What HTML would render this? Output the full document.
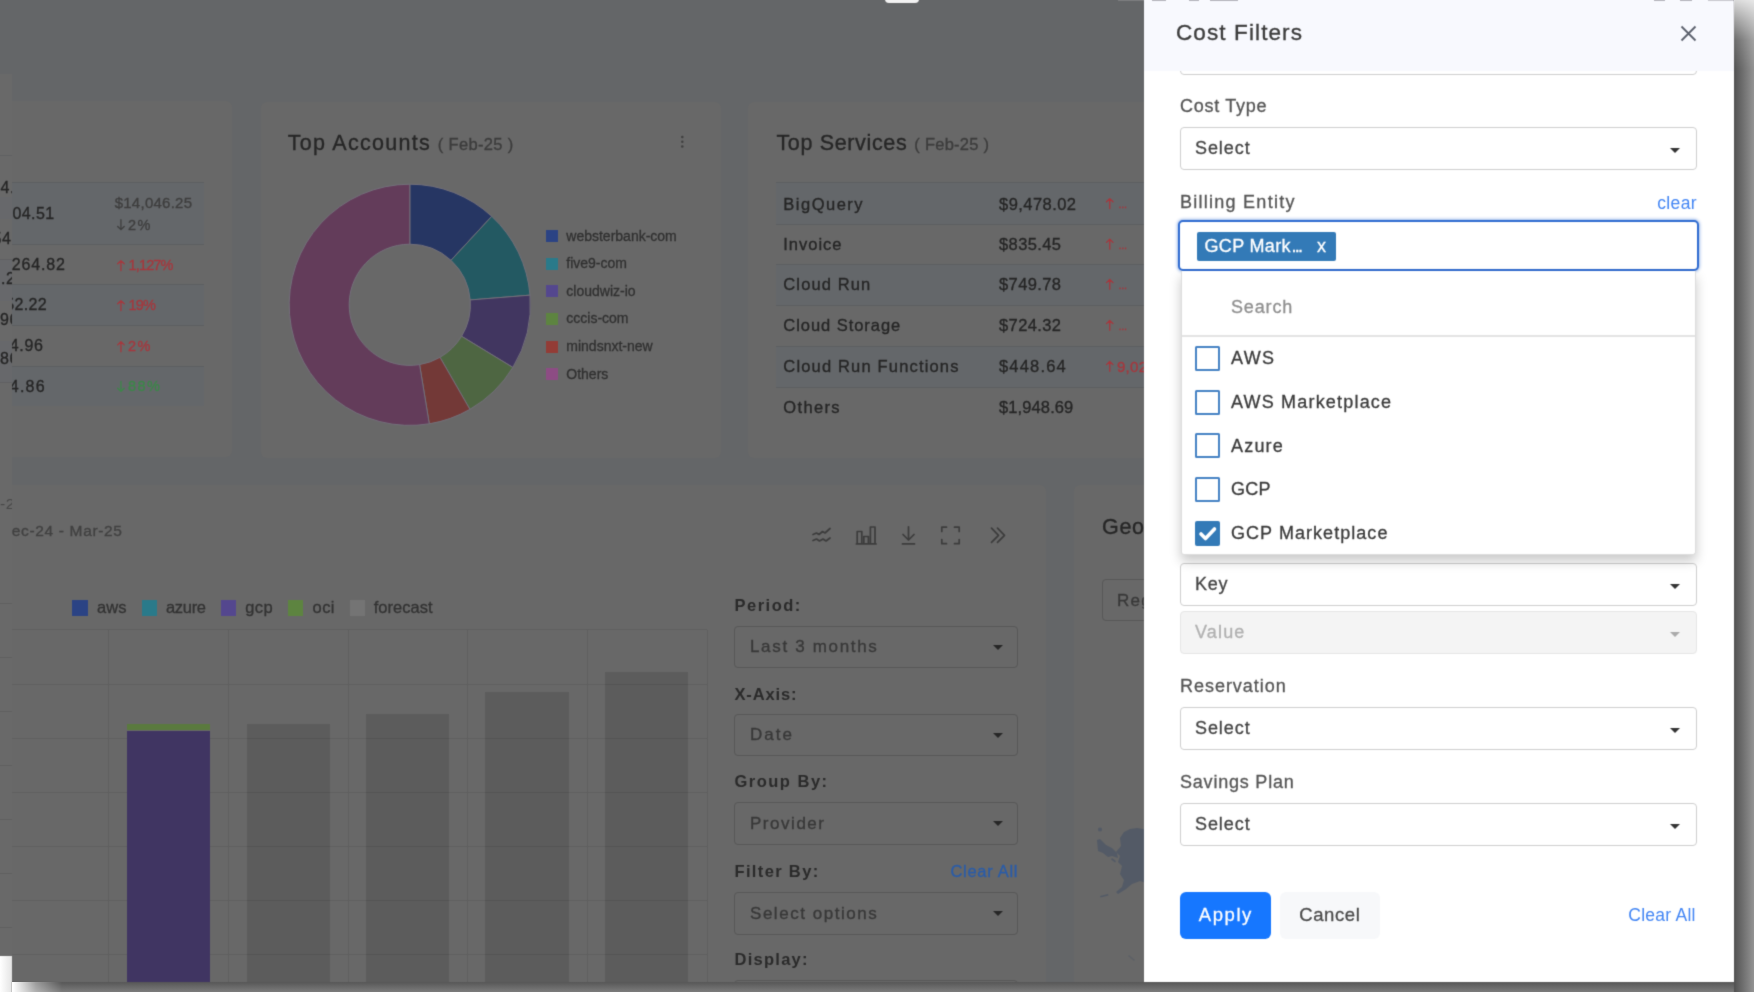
<!DOCTYPE html>
<html><head><meta charset="utf-8">
<style>
*{box-sizing:border-box;margin:0;padding:0}
html,body{width:1754px;height:992px;overflow:hidden;background:#fff;font-family:"Liberation Sans",sans-serif;}
.abs{position:absolute}
.t{position:absolute;white-space:nowrap;line-height:1;color:#333}
#shadow{position:absolute;left:14px;top:4px;width:1718px;height:974px;box-shadow:0 6px 14px 4px rgba(0,0,0,.75);}
#screen{position:absolute;left:-6px;top:-6px;width:1740px;height:988px;overflow:hidden;background:#646668;clip-path:polygon(0 0,1740px 0,1740px 988px,18px 988px,18px 962px,0 962px);}
#all{position:absolute;left:0;top:0;width:1754px;height:992px;filter:url(#soft)}
#dim{position:absolute;left:0;top:0;width:1734px;height:982px;background:rgba(0,0,0,.6)}
.card{position:absolute;background:#fff;border-radius:6px}
.sel{position:absolute;border:1px solid #cfcfcf;border-radius:4px;background:#fff}
.caret{position:absolute;width:0;height:0;border-left:5px solid transparent;border-right:5px solid transparent;border-top:5px solid #333}
</style></head><body>
<svg width="0" height="0" style="position:absolute"><defs><filter id="soft" x="0" y="0" width="100%" height="100%" color-interpolation-filters="sRGB"><feConvolveMatrix order="3" kernelMatrix="0.02 0.1 0.02 0.1 0.52 0.1 0.02 0.1 0.02" divisor="1" edgeMode="duplicate" preserveAlpha="true"/></filter></defs></svg>
<div id="all">
<div class="abs" style="left:1734px;top:-6px;width:26px;height:1004px;background:linear-gradient(to right,#4e4e4e 0,#585858 2px,#939393 20px,#a6a6a6 26px);-webkit-mask-image:linear-gradient(to bottom,rgba(0,0,0,.2) 0,rgba(0,0,0,.22) 6px,rgba(0,0,0,.55) 26px,rgba(0,0,0,.85) 46px,#000 76px);mask-image:linear-gradient(to bottom,rgba(0,0,0,.2) 0,rgba(0,0,0,.22) 6px,rgba(0,0,0,.55) 26px,rgba(0,0,0,.85) 46px,#000 76px)"></div>
<div class="abs" style="left:-6px;top:982px;width:1740px;height:16px;background:linear-gradient(to bottom,#555 0,#5e5e5e 2px,#7c7c7c 10px,#8c8c8c 16px);-webkit-mask-image:linear-gradient(to right,transparent 19px,rgba(0,0,0,.6) 42px,#000 68px);mask-image:linear-gradient(to right,transparent 19px,rgba(0,0,0,.6) 42px,#000 68px)"></div>
<div class="abs" style="left:-6px;top:956px;width:18px;height:42px;background:linear-gradient(to right,#fff 0,#fff 6px,#e4e4e4 18px)"></div>
<div id="screen"><div class="abs" style="left:6px;top:6px;width:0;height:0">
<div class="card" style="left:-20px;top:101px;width:252px;height:356px;background:#686868"></div>
<div class="abs" style="left:12px;top:182.6px;width:191.6px;height:61.70000000000002px;background:#64676a;"></div>
<div class="abs" style="left:12px;top:182.1px;width:191.6px;height:1px;background:#5c5e61;"></div>
<div class="abs" style="left:12px;top:244.3px;width:191.6px;height:40.39999999999998px;background:#686868;"></div>
<div class="abs" style="left:12px;top:243.8px;width:191.6px;height:1px;background:#5c5e61;"></div>
<div class="abs" style="left:12px;top:284.7px;width:191.6px;height:41.0px;background:#64676a;"></div>
<div class="abs" style="left:12px;top:284.2px;width:191.6px;height:1px;background:#5c5e61;"></div>
<div class="abs" style="left:12px;top:325.7px;width:191.6px;height:40.900000000000034px;background:#686868;"></div>
<div class="abs" style="left:12px;top:325.2px;width:191.6px;height:1px;background:#5c5e61;"></div>
<div class="abs" style="left:12px;top:366.6px;width:191.6px;height:39.799999999999955px;background:#64676a;"></div>
<div class="abs" style="left:12px;top:366.1px;width:191.6px;height:1px;background:#5c5e61;"></div>
<div class="t" style="left:3.2px;top:205.6px;font-size:16px;color:#252525;letter-spacing:0.41px;font-weight:normal;-webkit-text-stroke:0.33px #252525;">204.51</div>
<div class="t" style="left:11.8px;top:257.3px;font-size:16px;color:#252525;letter-spacing:0.85px;font-weight:normal;-webkit-text-stroke:0.33px #252525;">264.82</div>
<div class="t" style="left:5.2px;top:297.3px;font-size:16px;color:#252525;letter-spacing:0.34px;font-weight:normal;-webkit-text-stroke:0.33px #252525;">52.22</div>
<div class="t" style="left:9.8px;top:338.4px;font-size:16px;color:#252525;letter-spacing:0.62px;font-weight:normal;-webkit-text-stroke:0.33px #252525;">4.96</div>
<div class="t" style="left:9.8px;top:378.7px;font-size:16px;color:#252525;letter-spacing:1.22px;font-weight:normal;-webkit-text-stroke:0.33px #252525;">4.86</div>
<div class="t" style="left:114.7px;top:194.8px;font-size:15px;color:#3e3e3e;letter-spacing:0.25px;font-weight:normal;-webkit-text-stroke:0.33px #3e3e3e;">$14,046.25</div>
<svg class="abs" style="left:0;top:0" width="1734" height="982"><path d="M120.95,219.75 L120.95,229.65 M117.70,226.50 L120.95,229.65 L124.20,226.50" stroke="#3e3e3e" stroke-width="1.3" fill="none" stroke-linecap="round" stroke-linejoin="round"/></svg>
<div class="t" style="left:128px;top:217.8px;font-size:14.5px;color:#3e3e3e;letter-spacing:1.55px;font-weight:normal;-webkit-text-stroke:0.33px #3e3e3e;">2%</div>
<svg class="abs" style="left:0;top:0" width="1734" height="982"><path d="M120.95,270.55 L120.95,260.65 M117.70,263.80 L120.95,260.65 L124.20,263.80" stroke="#a6373d" stroke-width="1.3" fill="none" stroke-linecap="round" stroke-linejoin="round"/></svg>
<div class="t" style="left:128.5px;top:258.1px;font-size:14.5px;color:#a6373d;letter-spacing:-0.84px;font-weight:normal;-webkit-text-stroke:0.33px #a6373d;">1,127%</div>
<svg class="abs" style="left:0;top:0" width="1734" height="982"><path d="M120.95,310.55 L120.95,300.65 M117.70,303.80 L120.95,300.65 L124.20,303.80" stroke="#a6373d" stroke-width="1.3" fill="none" stroke-linecap="round" stroke-linejoin="round"/></svg>
<div class="t" style="left:128.5px;top:298.1px;font-size:14.5px;color:#a6373d;letter-spacing:-0.76px;font-weight:normal;-webkit-text-stroke:0.33px #a6373d;">19%</div>
<svg class="abs" style="left:0;top:0" width="1734" height="982"><path d="M120.95,351.65 L120.95,341.75 M117.70,344.90 L120.95,341.75 L124.20,344.90" stroke="#a6373d" stroke-width="1.3" fill="none" stroke-linecap="round" stroke-linejoin="round"/></svg>
<div class="t" style="left:128px;top:339.1px;font-size:14.5px;color:#a6373d;letter-spacing:1.55px;font-weight:normal;-webkit-text-stroke:0.33px #a6373d;">2%</div>
<svg class="abs" style="left:0;top:0" width="1734" height="982"><path d="M120.95,381.45 L120.95,391.35 M117.70,388.20 L120.95,391.35 L124.20,388.20" stroke="#3c8749" stroke-width="1.3" fill="none" stroke-linecap="round" stroke-linejoin="round"/></svg>
<div class="t" style="left:128px;top:379.4px;font-size:14.5px;color:#3c8749;letter-spacing:1.49px;font-weight:normal;-webkit-text-stroke:0.33px #3c8749;">88%</div>
<div class="card" style="left:260.5px;top:101.5px;width:460px;height:356px;background:#686868"></div>
<div class="t" style="left:287.8px;top:132.8px;font-size:21.5px;color:#262626;letter-spacing:1.28px;font-weight:normal;-webkit-text-stroke:0.35px #262626;">Top Accounts</div>
<div class="t" style="left:437.8px;top:135.8px;font-size:16.5px;color:#3c3c3c;letter-spacing:0.34px;font-weight:normal;-webkit-text-stroke:0.33px #3c3c3c;">( Feb-25 )</div>
<svg class="abs" style="left:680px;top:134px" width="5" height="16" viewBox="0 0 5 16"><circle cx="2.3" cy="3" r="1.25" fill="#3f3f3f"/><circle cx="2.3" cy="7.7" r="1.25" fill="#3f3f3f"/><circle cx="2.3" cy="12.5" r="1.25" fill="#3f3f3f"/></svg>
<svg class="abs" style="left:0;top:0" width="1734" height="982">
<path d="M409.80,184.20 A120.6,120.6 0 0 1 491.74,216.31 L450.97,260.34 A60.6,60.6 0 0 0 409.80,244.20 Z" fill="#263663" stroke="#73707a" stroke-width="1"/>
<path d="M491.74,216.31 A120.6,120.6 0 0 1 530.01,295.13 L470.20,299.94 A60.6,60.6 0 0 0 450.97,260.34 Z" fill="#235962" stroke="#73707a" stroke-width="1"/>
<path d="M530.01,295.13 A120.6,120.6 0 0 1 512.85,367.45 L461.58,336.28 A60.6,60.6 0 0 0 470.20,299.94 Z" fill="#413660" stroke="#73707a" stroke-width="1"/>
<path d="M512.85,367.45 A120.6,120.6 0 0 1 469.92,409.35 L440.01,357.33 A60.6,60.6 0 0 0 461.58,336.28 Z" fill="#4e6642" stroke="#73707a" stroke-width="1"/>
<path d="M469.92,409.35 A120.6,120.6 0 0 1 429.29,423.81 L419.59,364.60 A60.6,60.6 0 0 0 440.01,357.33 Z" fill="#733937" stroke="#73707a" stroke-width="1"/>
<path d="M429.29,423.81 A120.6,120.6 0 1 1 409.80,184.20 L409.80,244.20 A60.6,60.6 0 1 0 419.59,364.60 Z" fill="#633c5a" stroke="#73707a" stroke-width="1"/>
</svg>
<div class="abs" style="left:545.8px;top:230.0px;width:12.5px;height:12.2px;background:#2b4384;"></div>
<div class="t" style="left:566.3px;top:228.5px;font-size:14px;color:#303030;letter-spacing:0.00px;font-weight:normal;-webkit-text-stroke:0.3px #303030;">websterbank-com</div>
<div class="abs" style="left:545.8px;top:257.6px;width:12.5px;height:12.2px;background:#2a7a8a;"></div>
<div class="t" style="left:566.3px;top:256.1px;font-size:14px;color:#303030;letter-spacing:0.00px;font-weight:normal;-webkit-text-stroke:0.3px #303030;">five9-com</div>
<div class="abs" style="left:545.8px;top:285.3px;width:12.5px;height:12.2px;background:#54478e;"></div>
<div class="t" style="left:566.3px;top:283.8px;font-size:14px;color:#303030;letter-spacing:0.00px;font-weight:normal;-webkit-text-stroke:0.3px #303030;">cloudwiz-io</div>
<div class="abs" style="left:545.8px;top:312.9px;width:12.5px;height:12.2px;background:#5d8440;"></div>
<div class="t" style="left:566.3px;top:311.4px;font-size:14px;color:#303030;letter-spacing:0.00px;font-weight:normal;-webkit-text-stroke:0.3px #303030;">cccis-com</div>
<div class="abs" style="left:545.8px;top:340.6px;width:12.5px;height:12.2px;background:#933c36;"></div>
<div class="t" style="left:566.3px;top:339.1px;font-size:14px;color:#303030;letter-spacing:0.00px;font-weight:normal;-webkit-text-stroke:0.3px #303030;">mindsnxt-new</div>
<div class="abs" style="left:545.8px;top:368.2px;width:12.5px;height:12.2px;background:#8d4c84;"></div>
<div class="t" style="left:566.3px;top:366.8px;font-size:14px;color:#303030;letter-spacing:0.00px;font-weight:normal;-webkit-text-stroke:0.3px #303030;">Others</div>
<div class="card" style="left:747.7px;top:101.5px;width:461px;height:356px;background:#686868"></div>
<div class="t" style="left:776.4px;top:132.8px;font-size:21.5px;color:#262626;letter-spacing:0.66px;font-weight:normal;-webkit-text-stroke:0.35px #262626;">Top Services</div>
<div class="t" style="left:914.3px;top:135.8px;font-size:16.5px;color:#3c3c3c;letter-spacing:0.25px;font-weight:normal;-webkit-text-stroke:0.33px #3c3c3c;">( Feb-25 )</div>
<div class="abs" style="left:775.6px;top:182px;width:400px;height:42px;background:#64676a;"></div>
<div class="abs" style="left:775.6px;top:181.5px;width:400px;height:1px;background:#5c5e61;"></div>
<div class="t" style="left:783.3px;top:195.6px;font-size:16.5px;color:#252525;letter-spacing:1.50px;font-weight:normal;-webkit-text-stroke:0.33px #252525;">BigQuery</div>
<div class="t" style="left:999px;top:195.6px;font-size:16.5px;color:#252525;letter-spacing:0.45px;font-weight:normal;-webkit-text-stroke:0.33px #252525;">$9,478.02</div>
<svg class="abs" style="left:0;top:0" width="1734" height="982"><path d="M1109.75,208.55 L1109.75,198.65 M1106.50,201.80 L1109.75,198.65 L1113.00,201.80" stroke="#a6373d" stroke-width="1.3" fill="none" stroke-linecap="round" stroke-linejoin="round"/></svg>
<div class="t" style="left:1118.5px;top:199.3px;font-size:11px;color:#a6373d;letter-spacing:-0.33px;font-weight:normal;-webkit-text-stroke:0.3px #a6373d;">...</div>
<div class="abs" style="left:775.6px;top:224px;width:400px;height:40.69999999999999px;background:#686868;"></div>
<div class="abs" style="left:775.6px;top:223.5px;width:400px;height:1px;background:#5c5e61;"></div>
<div class="t" style="left:783.3px;top:236.2px;font-size:16.5px;color:#252525;letter-spacing:0.99px;font-weight:normal;-webkit-text-stroke:0.33px #252525;">Invoice</div>
<div class="t" style="left:999px;top:236.2px;font-size:16.5px;color:#252525;letter-spacing:0.39px;font-weight:normal;-webkit-text-stroke:0.33px #252525;">$835.45</div>
<svg class="abs" style="left:0;top:0" width="1734" height="982"><path d="M1109.75,249.15 L1109.75,239.25 M1106.50,242.40 L1109.75,239.25 L1113.00,242.40" stroke="#a6373d" stroke-width="1.3" fill="none" stroke-linecap="round" stroke-linejoin="round"/></svg>
<div class="t" style="left:1118.5px;top:239.9px;font-size:11px;color:#a6373d;letter-spacing:-0.33px;font-weight:normal;-webkit-text-stroke:0.3px #a6373d;">...</div>
<div class="abs" style="left:775.6px;top:264.7px;width:400px;height:41.0px;background:#64676a;"></div>
<div class="abs" style="left:775.6px;top:264.2px;width:400px;height:1px;background:#5c5e61;"></div>
<div class="t" style="left:783.3px;top:276.4px;font-size:16.5px;color:#252525;letter-spacing:1.13px;font-weight:normal;-webkit-text-stroke:0.33px #252525;">Cloud Run</div>
<div class="t" style="left:999px;top:276.4px;font-size:16.5px;color:#252525;letter-spacing:0.39px;font-weight:normal;-webkit-text-stroke:0.33px #252525;">$749.78</div>
<svg class="abs" style="left:0;top:0" width="1734" height="982"><path d="M1109.75,289.35 L1109.75,279.45 M1106.50,282.60 L1109.75,279.45 L1113.00,282.60" stroke="#a6373d" stroke-width="1.3" fill="none" stroke-linecap="round" stroke-linejoin="round"/></svg>
<div class="t" style="left:1118.5px;top:280.1px;font-size:11px;color:#a6373d;letter-spacing:-0.33px;font-weight:normal;-webkit-text-stroke:0.3px #a6373d;">...</div>
<div class="abs" style="left:775.6px;top:305.7px;width:400px;height:40.60000000000002px;background:#686868;"></div>
<div class="abs" style="left:775.6px;top:305.2px;width:400px;height:1px;background:#5c5e61;"></div>
<div class="t" style="left:783.3px;top:317.4px;font-size:16.5px;color:#252525;letter-spacing:0.95px;font-weight:normal;-webkit-text-stroke:0.33px #252525;">Cloud Storage</div>
<div class="t" style="left:999px;top:317.4px;font-size:16.5px;color:#252525;letter-spacing:0.39px;font-weight:normal;-webkit-text-stroke:0.33px #252525;">$724.32</div>
<svg class="abs" style="left:0;top:0" width="1734" height="982"><path d="M1109.75,330.35 L1109.75,320.45 M1106.50,323.60 L1109.75,320.45 L1113.00,323.60" stroke="#a6373d" stroke-width="1.3" fill="none" stroke-linecap="round" stroke-linejoin="round"/></svg>
<div class="t" style="left:1118.5px;top:321.1px;font-size:11px;color:#a6373d;letter-spacing:-0.33px;font-weight:normal;-webkit-text-stroke:0.3px #a6373d;">...</div>
<div class="abs" style="left:775.6px;top:346.3px;width:400px;height:40.69999999999999px;background:#64676a;"></div>
<div class="abs" style="left:775.6px;top:345.8px;width:400px;height:1px;background:#5c5e61;"></div>
<div class="t" style="left:783.3px;top:358.4px;font-size:16.5px;color:#252525;letter-spacing:1.17px;font-weight:normal;-webkit-text-stroke:0.33px #252525;">Cloud Run Functions</div>
<div class="t" style="left:999px;top:358.4px;font-size:16.5px;color:#252525;letter-spacing:1.18px;font-weight:normal;-webkit-text-stroke:0.33px #252525;">$448.64</div>
<svg class="abs" style="left:0;top:0" width="1734" height="982"><path d="M1109.75,371.35 L1109.75,361.45 M1106.50,364.60 L1109.75,361.45 L1113.00,364.60" stroke="#a6373d" stroke-width="1.3" fill="none" stroke-linecap="round" stroke-linejoin="round"/></svg>
<div class="t" style="left:1117px;top:359.1px;font-size:15px;color:#a6373d;letter-spacing:0.27px;font-weight:normal;-webkit-text-stroke:0.33px #a6373d;">9,02</div>
<div class="abs" style="left:775.6px;top:387px;width:400px;height:41px;background:#686868;"></div>
<div class="abs" style="left:775.6px;top:386.5px;width:400px;height:1px;background:#5c5e61;"></div>
<div class="t" style="left:783.3px;top:398.6px;font-size:16.5px;color:#252525;letter-spacing:1.36px;font-weight:normal;-webkit-text-stroke:0.33px #252525;">Others</div>
<div class="t" style="left:999px;top:398.6px;font-size:16.5px;color:#252525;letter-spacing:0.11px;font-weight:normal;-webkit-text-stroke:0.33px #252525;">$1,948.69</div>
<div class="card" style="left:-20px;top:484.7px;width:1065.8px;height:520px;background:#686868"></div>
<div class="card" style="left:1073.7px;top:484.7px;width:700px;height:520px;background:#686868"></div>
<div class="t" style="left:0px;top:523.0px;font-size:15.5px;color:#414141;letter-spacing:0.65px;font-weight:normal;-webkit-text-stroke:0.33px #414141;">Dec-24 - Mar-25</div>
<div class="abs" style="left:72.4px;top:600.4px;width:15.4px;height:15.3px;background:#2b4384;"></div>
<div class="t" style="left:97px;top:599.4px;font-size:16.5px;color:#323232;letter-spacing:0.13px;font-weight:normal;-webkit-text-stroke:0.3px #323232;">aws</div>
<div class="abs" style="left:141.6px;top:600.4px;width:15.4px;height:15.3px;background:#2a7a8a;"></div>
<div class="t" style="left:166px;top:599.4px;font-size:16.5px;color:#323232;letter-spacing:-0.32px;font-weight:normal;-webkit-text-stroke:0.3px #323232;">azure</div>
<div class="abs" style="left:220.8px;top:600.4px;width:15.4px;height:15.3px;background:#54478e;"></div>
<div class="t" style="left:245.2px;top:599.4px;font-size:16.5px;color:#323232;letter-spacing:0.45px;font-weight:normal;-webkit-text-stroke:0.3px #323232;">gcp</div>
<div class="abs" style="left:288px;top:600.4px;width:15.4px;height:15.3px;background:#5d8440;"></div>
<div class="t" style="left:312.6px;top:599.4px;font-size:16.5px;color:#323232;letter-spacing:0.36px;font-weight:normal;-webkit-text-stroke:0.3px #323232;">oci</div>
<div class="abs" style="left:349.6px;top:600.4px;width:15.4px;height:15.3px;background:#747474;"></div>
<div class="t" style="left:373.7px;top:599.4px;font-size:16.5px;color:#323232;letter-spacing:0.04px;font-weight:normal;-webkit-text-stroke:0.3px #323232;">forecast</div>
<div class="abs" style="left:12px;top:629.3px;width:695px;height:1px;background:#5f5f5f;"></div>
<div class="abs" style="left:12px;top:684.0px;width:695px;height:1px;background:#5f5f5f;"></div>
<div class="abs" style="left:12px;top:737.8px;width:695px;height:1px;background:#5f5f5f;"></div>
<div class="abs" style="left:12px;top:791.5px;width:695px;height:1px;background:#5f5f5f;"></div>
<div class="abs" style="left:12px;top:845.5px;width:695px;height:1px;background:#5f5f5f;"></div>
<div class="abs" style="left:12px;top:899.8px;width:695px;height:1px;background:#5f5f5f;"></div>
<div class="abs" style="left:12px;top:953.5px;width:695px;height:1px;background:#5f5f5f;"></div>
<div class="abs" style="left:107.7px;top:629.8px;width:1px;height:360px;background:#5f5f5f;"></div>
<div class="abs" style="left:227.8px;top:629.8px;width:1px;height:360px;background:#5f5f5f;"></div>
<div class="abs" style="left:347.5px;top:629.8px;width:1px;height:360px;background:#5f5f5f;"></div>
<div class="abs" style="left:466.5px;top:629.8px;width:1px;height:360px;background:#5f5f5f;"></div>
<div class="abs" style="left:586.5px;top:629.8px;width:1px;height:360px;background:#5f5f5f;"></div>
<div class="abs" style="left:706.5px;top:629.8px;width:1px;height:360px;background:#5f5f5f;"></div>
<div class="abs" style="left:246.8px;top:724px;width:82.89999999999998px;height:400px;background:rgba(0,0,0,.115);"></div>
<div class="abs" style="left:366.2px;top:714.3px;width:82.80000000000001px;height:400px;background:rgba(0,0,0,.115);"></div>
<div class="abs" style="left:485.4px;top:691.6px;width:83.39999999999998px;height:400px;background:rgba(0,0,0,.115);"></div>
<div class="abs" style="left:605.2px;top:671.6px;width:83.09999999999991px;height:400px;background:rgba(0,0,0,.115);"></div>
<div class="abs" style="left:126.7px;top:724px;width:83.3px;height:6px;background:#5a7a3e;"></div>
<div class="abs" style="left:126.7px;top:731.2px;width:83.3px;height:400px;background:#403562;"></div>
<div class="t" style="left:734.5px;top:596.8px;font-size:16.5px;color:#2a2a2a;letter-spacing:1.49px;font-weight:bold;">Period:</div>
<div class="t" style="left:734.5px;top:685.5px;font-size:16.5px;color:#2a2a2a;letter-spacing:0.86px;font-weight:bold;">X-Axis:</div>
<div class="t" style="left:734.5px;top:773.4px;font-size:16.5px;color:#2a2a2a;letter-spacing:1.49px;font-weight:bold;">Group By:</div>
<div class="t" style="left:734.5px;top:863.4px;font-size:16.5px;color:#2a2a2a;letter-spacing:1.35px;font-weight:bold;">Filter By:</div>
<div class="t" style="left:734.5px;top:951.2px;font-size:16.5px;color:#2a2a2a;letter-spacing:1.26px;font-weight:bold;">Display:</div>
<div class="sel" style="left:734px;top:625.8px;width:284px;height:42.5px;border-color:#575757;background:#686868"></div>
<div class="t" style="left:750px;top:638.3px;font-size:17px;color:#383838;letter-spacing:1.67px;font-weight:normal;-webkit-text-stroke:0.33px #383838;">Last 3 months</div>
<div class="caret" style="left:992.8px;top:645.0999999999999px;border-left-width:5.2px;border-right-width:5.2px;border-top-width:5.5px;border-top-color:#262626"></div>
<div class="sel" style="left:734px;top:713.7px;width:284px;height:42.5px;border-color:#575757;background:#686868"></div>
<div class="t" style="left:750px;top:726.2px;font-size:17px;color:#383838;letter-spacing:2.03px;font-weight:normal;-webkit-text-stroke:0.33px #383838;">Date</div>
<div class="caret" style="left:992.8px;top:733.0px;border-left-width:5.2px;border-right-width:5.2px;border-top-width:5.5px;border-top-color:#262626"></div>
<div class="sel" style="left:734px;top:802px;width:284px;height:42.5px;border-color:#575757;background:#686868"></div>
<div class="t" style="left:750px;top:814.5px;font-size:17px;color:#383838;letter-spacing:1.53px;font-weight:normal;-webkit-text-stroke:0.33px #383838;">Provider</div>
<div class="caret" style="left:992.8px;top:821.3px;border-left-width:5.2px;border-right-width:5.2px;border-top-width:5.5px;border-top-color:#262626"></div>
<div class="sel" style="left:734px;top:892px;width:284px;height:42.5px;border-color:#575757;background:#686868"></div>
<div class="t" style="left:750px;top:904.5px;font-size:17px;color:#383838;letter-spacing:1.54px;font-weight:normal;-webkit-text-stroke:0.33px #383838;">Select options</div>
<div class="caret" style="left:992.8px;top:911.3px;border-left-width:5.2px;border-right-width:5.2px;border-top-width:5.5px;border-top-color:#262626"></div>
<div class="sel" style="left:734px;top:979.5px;width:284px;height:42px;border-color:#575757;background:#686868"></div>
<div class="t" style="left:950.5px;top:863.4px;font-size:16.5px;color:#2a5ca8;letter-spacing:0.69px;font-weight:normal;-webkit-text-stroke:0.33px #2a5ca8;">Clear All</div>
<div class="t" style="left:1102px;top:517.2px;font-size:21.5px;color:#262626;letter-spacing:0.68px;font-weight:normal;-webkit-text-stroke:0.35px #262626;">Geo</div>
<div class="sel" style="left:1102px;top:579px;width:200px;height:42px;border-color:#575757;background:#686868"></div>
<div class="t" style="left:1117px;top:591.5px;font-size:17px;color:#383838;letter-spacing:1.23px;font-weight:normal;-webkit-text-stroke:0.33px #383838;">Region</div>
<svg class="abs" style="left:0;top:0" width="1734" height="982" fill="none" stroke="#3c3c3c" stroke-width="1.7" stroke-linecap="round" stroke-linejoin="round">
<path d="M813,534.5 l3.5,-1.5 l2.5,1.5 l3.5,-3 l2.5,1.5 l5,-4.5"/>
<path d="M813,540.5 l3.5,-1.5 l3,2 l3.5,-2 l3,2 l4,-3"/>
<path d="M857.2,543.8 V531.5 h4.6 V543.8 M863.8,543.8 V536.5 h4.6 V543.8 M870.4,543.8 V527 h4.6 V543.8 M856.4,543.9 H876" />
<path d="M908.5,526.8 V540 M903,534.5 L908.5,540 L914,534.5 M902.5,543.9 H914.5"/>
<path d="M941.8,531.5 V527.2 H946.5 M954.5,527.2 H959.2 V531.5 M959.2,539.5 V543.7 H954.5 M946.5,543.7 H941.8 V539.5"/>
<path d="M991.5,528.2 L998.5,535.3 L991.5,542.4 M997.5,528.2 L1004.5,535.3 L997.5,542.4"/>
</svg>
<svg class="abs" style="left:0;top:0" width="1734" height="982" fill="#535a66">
<path d="M1120,838 L1124,832 L1130,829 L1137,828 L1143,829 L1150,830 L1150,884 L1140,881 L1132,884 L1126,889 L1118,894 L1116,892 L1122,887 L1124,880 L1120,874 L1122,866 L1118,862 L1120,856 L1116,852 L1121,846 Z"/>
<path d="M1097,840 L1100,839 L1106,845 L1112,848 L1117,853 L1118,858 L1112,856 L1108,857 L1103,853 L1098,851 Z"/>
<circle cx="1100" cy="829.5" r="2"/>
<path d="M1112,858 l4,3 l-1,1.5 l-4,-3 Z"/>
<path d="M1100,896 l8,-2 l.5,1.5 l-8,2 Z"/>
<path d="M1129,955 l6,5 l-1,1 l-6,-5 Z" fill="#5d6066"/>
</svg>
<div class="abs" style="left:-5px;top:74px;width:17px;height:883px;background:#696969;"></div>
<div class="abs" style="left:-5px;top:155.0px;width:17px;height:1px;background:#5f6062;"></div>
<div class="abs" style="left:-5px;top:218.0px;width:17px;height:1px;background:#5f6062;"></div>
<div class="abs" style="left:-5px;top:259.1px;width:17px;height:1px;background:#5f6062;"></div>
<div class="abs" style="left:-5px;top:300.2px;width:17px;height:1px;background:#5f6062;"></div>
<div class="abs" style="left:-5px;top:340.5px;width:17px;height:1px;background:#5f6062;"></div>
<div class="abs" style="left:-5px;top:381.5px;width:17px;height:1px;background:#5f6062;"></div>
<div class="abs" style="left:-5px;top:197px;width:17px;height:21.5px;background:#67686b;"></div>
<div class="abs" style="left:-5px;top:259.6px;width:17px;height:41px;background:#67686b;"></div>
<div class="abs" style="left:-5px;top:341px;width:17px;height:41px;background:#67686b;"></div>
<div class="abs" style="left:-5px;top:150px;width:17px;height:300px;overflow:hidden">
<div class="t" style="left:5.5px;top:30.3px;font-size:16px;color:#252525;letter-spacing:0.60px;font-weight:normal;-webkit-text-stroke:0.33px #252525;">4.</div>
<div class="t" style="left:-2.5px;top:80.7px;font-size:16px;color:#252525;letter-spacing:0.60px;font-weight:normal;-webkit-text-stroke:0.33px #252525;">54</div>
<div class="t" style="left:6px;top:120.5px;font-size:16px;color:#252525;letter-spacing:0.60px;font-weight:normal;-webkit-text-stroke:0.33px #252525;">.2</div>
<div class="t" style="left:5px;top:162.0px;font-size:16px;color:#252525;letter-spacing:0.60px;font-weight:normal;-webkit-text-stroke:0.33px #252525;">96</div>
<div class="t" style="left:5px;top:201.0px;font-size:16px;color:#252525;letter-spacing:0.60px;font-weight:normal;-webkit-text-stroke:0.33px #252525;">86</div>
</div>
<div class="abs" style="left:-5px;top:603.1px;width:17px;height:1px;background:#5f5f5f;"></div>
<div class="abs" style="left:-5px;top:657.0px;width:17px;height:1px;background:#5f5f5f;"></div>
<div class="abs" style="left:-5px;top:711.0px;width:17px;height:1px;background:#5f5f5f;"></div>
<div class="abs" style="left:-5px;top:765.0px;width:17px;height:1px;background:#5f5f5f;"></div>
<div class="abs" style="left:-5px;top:819.0px;width:17px;height:1px;background:#5f5f5f;"></div>
<div class="abs" style="left:-5px;top:873.0px;width:17px;height:1px;background:#5f5f5f;"></div>
<div class="abs" style="left:-5px;top:927.0px;width:17px;height:1px;background:#5f5f5f;"></div>
<div class="abs" style="left:-5px;top:490px;width:17px;height:30px;overflow:hidden">
<div class="t" style="left:5px;top:6.2px;font-size:15.5px;color:#474747;letter-spacing:0.50px;font-weight:normal;">-2</div>
</div>
<div class="abs" style="left:885px;top:-8px;width:34px;height:10.5px;background:#f2f2f2;border-radius:4px"></div>
<div class="abs" style="left:1118px;top:-2px;width:26px;height:3px;background:#7c7d7f;"></div>
</div></div>
<div id="panel" class="abs" style="left:1144px;top:-6px;width:590px;height:988px;background:#fff;overflow:hidden"><div class="abs" style="left:0;top:6px;width:0;height:0">
<div class="sel" style="left:36px;top:31.5px;width:517px;height:43px"></div>
<div class="abs" style="left:0;top:-6px;width:590px;height:76.5px;background:#f8f9fe"></div>
<div class="abs" style="left:8px;top:-2px;width:14px;height:2.8px;background:#b4b4bc"></div>
<div class="abs" style="left:45px;top:-2px;width:10px;height:2.8px;background:#b4b4bc"></div>
<div class="abs" style="left:66px;top:-2px;width:28px;height:2.8px;background:#b4b4bc"></div>
<div class="abs" style="left:510px;top:-2px;width:11px;height:2.8px;background:#b4b4bc"></div>
<div class="abs" style="left:536px;top:-2px;width:12px;height:2.8px;background:#b4b4bc"></div>
<div class="abs" style="left:564px;top:-2px;width:26px;height:2.8px;background:#c9c9cf"></div>
<div class="t" style="left:32px;top:21.8px;font-size:22.5px;color:#3c3c3c;letter-spacing:1.11px;font-weight:normal;-webkit-text-stroke:0.35px #3c3c3c;">Cost Filters</div>
<svg class="abs" style="left:536px;top:25px" width="17" height="17" viewBox="0 0 17 17"><path d="M1.5 1.5 L15.5 15.5 M15.5 1.5 L1.5 15.5" stroke="#5a5f6b" stroke-width="1.8" fill="none"/></svg>
<div class="t" style="left:36px;top:97.0px;font-size:18px;color:#555;letter-spacing:0.72px;font-weight:normal;-webkit-text-stroke:0.3px #555;">Cost Type</div>
<div class="sel" style="left:36px;top:126.8px;width:517px;height:43.5px;background:#fff;border-color:#cfcfcf"></div>
<div class="t" style="left:51px;top:139.0px;font-size:18px;color:#444;letter-spacing:0.92px;font-weight:normal;-webkit-text-stroke:0.3px #444;">Select</div>
<div class="caret" style="left:525.5px;top:147.85000000000002px;border-top-color:#333;border-top-width:5.5px;border-left-width:5.2px;border-right-width:5.2px"></div>
<div class="t" style="left:36px;top:193.0px;font-size:18px;color:#555;letter-spacing:1.26px;font-weight:normal;-webkit-text-stroke:0.3px #555;">Billing Entity</div>
<div class="t" style="left:513.3px;top:195.4px;font-size:17.5px;color:#4285f4;letter-spacing:0.32px;font-weight:normal;">clear</div>
<div class="sel" style="left:36px;top:563px;width:517px;height:43.3px;background:#fff;border-color:#cfcfcf"></div>
<div class="t" style="left:51px;top:575.0px;font-size:18px;color:#444;letter-spacing:0.74px;font-weight:normal;-webkit-text-stroke:0.3px #444;">Key</div>
<div class="caret" style="left:525.5px;top:583.9499999999999px;border-top-color:#333;border-top-width:5.5px;border-left-width:5.2px;border-right-width:5.2px"></div>
<div class="sel" style="left:36px;top:611.2px;width:517px;height:43.3px;background:#f4f4f4;border-color:#e6e6e6"></div>
<div class="t" style="left:51px;top:623.2px;font-size:18px;color:#b0b0b0;letter-spacing:1.15px;font-weight:normal;-webkit-text-stroke:0.3px #b0b0b0;">Value</div>
<div class="caret" style="left:525.5px;top:632.15px;border-top-color:#aaa;border-top-width:5.5px;border-left-width:5.2px;border-right-width:5.2px"></div>
<div class="abs" style="left:34px;top:220px;width:521px;height:51px;border:2.5px solid #2f6bd0;border-radius:5px;background:#fff;box-shadow:0 0 3px 1px rgba(47,107,208,.45)"></div>
<div class="abs" style="left:52.5px;top:232px;width:139px;height:29px;background:#337ab7;border-radius:2px"></div>
<div class="t" style="left:60.5px;top:237.3px;font-size:18px;color:#fff;letter-spacing:0.33px;font-weight:normal;-webkit-text-stroke:0.3px #fff;">GCP Mark</div>
<div class="t" style="left:147.5999999999999px;top:237.3px;font-size:18px;color:#fff;letter-spacing:-1.80px;font-weight:normal;-webkit-text-stroke:0.3px #fff;">...</div>
<div class="t" style="left:173px;top:237.3px;font-size:18px;color:#fff;letter-spacing:0.00px;font-weight:normal;-webkit-text-stroke:0.3px #fff;">x</div>
<div class="abs" style="left:37px;top:271px;width:515px;height:284px;background:#fff;border:1px solid #ddd;border-top:none;box-shadow:0 6px 12px rgba(0,0,0,.22);border-radius:0 0 3px 3px"></div>
<div class="t" style="left:87px;top:298.0px;font-size:18px;color:#8f8f8f;letter-spacing:0.86px;font-weight:normal;-webkit-text-stroke:0.3px #8f8f8f;">Search</div>
<div class="abs" style="left:38px;top:334.5px;width:513px;height:2px;background:#e3e3e3"></div>
<div class="abs" style="left:51px;top:345.9px;width:25px;height:25px;border:2.8px solid #4682c4;border-radius:1.5px;background:#fff"></div>
<div class="t" style="left:87px;top:349.4px;font-size:18px;color:#3a3a3a;letter-spacing:1.33px;font-weight:normal;-webkit-text-stroke:0.3px #3a3a3a;">AWS</div>
<div class="abs" style="left:51px;top:389.5px;width:25px;height:25px;border:2.8px solid #4682c4;border-radius:1.5px;background:#fff"></div>
<div class="t" style="left:87px;top:393.0px;font-size:18px;color:#3a3a3a;letter-spacing:1.19px;font-weight:normal;-webkit-text-stroke:0.3px #3a3a3a;">AWS Marketplace</div>
<div class="abs" style="left:51px;top:433.2px;width:25px;height:25px;border:2.8px solid #4682c4;border-radius:1.5px;background:#fff"></div>
<div class="t" style="left:87px;top:436.7px;font-size:18px;color:#3a3a3a;letter-spacing:1.20px;font-weight:normal;-webkit-text-stroke:0.3px #3a3a3a;">Azure</div>
<div class="abs" style="left:51px;top:476.8px;width:25px;height:25px;border:2.8px solid #4682c4;border-radius:1.5px;background:#fff"></div>
<div class="t" style="left:87px;top:480.3px;font-size:18px;color:#3a3a3a;letter-spacing:0.30px;font-weight:normal;-webkit-text-stroke:0.3px #3a3a3a;">GCP</div>
<div class="abs" style="left:51px;top:520.5px;width:25px;height:25px;background:#337ab7;border-radius:2px"></div>
<svg class="abs" style="left:51px;top:520.5px" width="25" height="25" viewBox="0 0 25 25"><path d="M6 13 L10.5 17.5 L19.5 8" stroke="#fff" stroke-width="3.6" fill="none" stroke-linecap="round" stroke-linejoin="round"/></svg>
<div class="t" style="left:87px;top:524.0px;font-size:18px;color:#3a3a3a;letter-spacing:1.05px;font-weight:normal;-webkit-text-stroke:0.3px #3a3a3a;">GCP Marketplace</div>
<div class="t" style="left:36px;top:676.7px;font-size:18px;color:#555;letter-spacing:0.97px;font-weight:normal;-webkit-text-stroke:0.3px #555;">Reservation</div>
<div class="sel" style="left:36px;top:706.8px;width:517px;height:43.3px;background:#fff;border-color:#cfcfcf"></div>
<div class="t" style="left:51px;top:718.8px;font-size:18px;color:#444;letter-spacing:0.92px;font-weight:normal;-webkit-text-stroke:0.3px #444;">Select</div>
<div class="caret" style="left:525.5px;top:727.7499999999999px;border-top-color:#333;border-top-width:5.5px;border-left-width:5.2px;border-right-width:5.2px"></div>
<div class="t" style="left:36px;top:772.7px;font-size:18px;color:#555;letter-spacing:0.79px;font-weight:normal;-webkit-text-stroke:0.3px #555;">Savings Plan</div>
<div class="sel" style="left:36px;top:802.6px;width:517px;height:43.5px;background:#fff;border-color:#cfcfcf"></div>
<div class="t" style="left:51px;top:814.8px;font-size:18px;color:#444;letter-spacing:0.92px;font-weight:normal;-webkit-text-stroke:0.3px #444;">Select</div>
<div class="caret" style="left:525.5px;top:823.65px;border-top-color:#333;border-top-width:5.5px;border-left-width:5.2px;border-right-width:5.2px"></div>
<div class="abs" style="left:36px;top:891.5px;width:90.5px;height:47.3px;background:#1677ff;border-radius:6px"></div>
<div class="t" style="left:54.799999999999955px;top:906.2px;font-size:18.5px;color:#fff;letter-spacing:1.56px;font-weight:normal;-webkit-text-stroke:0.3px #fff;">Apply</div>
<div class="abs" style="left:136px;top:891.5px;width:99.5px;height:47.3px;background:#f7f8fa;border-radius:6px"></div>
<div class="t" style="left:155.29999999999995px;top:906.2px;font-size:18.5px;color:#4a4a4a;letter-spacing:0.58px;font-weight:normal;-webkit-text-stroke:0.3px #4a4a4a;">Cancel</div>
<div class="t" style="left:484.29999999999995px;top:906.8px;font-size:17.5px;color:#4285f4;letter-spacing:0.25px;font-weight:normal;">Clear All</div>
</div></div>
</div>
</body></html>
